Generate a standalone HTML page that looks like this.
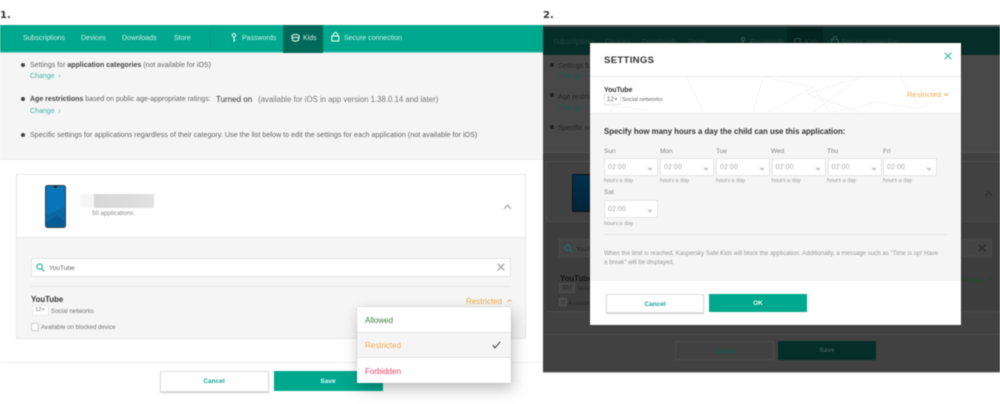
<!DOCTYPE html>
<html><head><meta charset="utf-8">
<style>
html,body{margin:0;padding:0;background:#fff}
body{width:1000px;height:404px;overflow:hidden;position:relative;font-family:"Liberation Sans",sans-serif;color:#555;filter:blur(.4px)}
div,span,b{position:absolute;white-space:nowrap}
b span,span span{position:static}
svg{position:absolute;overflow:visible}
.t{font-size:7px;line-height:10px}
.nav{font-size:7px;line-height:10px;color:#cdeee8;top:34px}
.dnav{font-size:7px;line-height:10px;color:#274640;top:38px}
.sel{width:52px;height:16px;background:#fff;border:1px solid #e6e6e6;top:158px}
.sel span{left:3px;top:4px;font-size:7px;line-height:10px;color:#aaa;letter-spacing:.1px}
.sel i{position:absolute;right:5px;top:7px;width:3px;height:3px;border-right:1px solid #999;border-bottom:1px solid #999;transform:rotate(45deg) scale(.8)}
.day{font-size:6.5px;line-height:8px;color:#888;top:148px}
.hd{font-size:5.6px;line-height:8px;color:#999;top:177px}
</style></head><body>

<!-- LEFT PANEL -->
<b style="left:0;top:10px;font:bold 10px/12px 'DejaVu Sans',sans-serif;color:#333">1.</b>
<div style="left:0;top:25px;width:543px;height:27px;background:#00a88e;border-bottom:1px solid #8fd8cb"></div>
<div style="left:0;top:53px;width:543px;height:106px;background:#f5f5f5;border-bottom:1px solid #eee"></div>
<div class="nav" style="left:23px">Subscriptions</div>
<div class="nav" style="left:81px">Devices</div>
<div class="nav" style="left:122px">Downloads</div>
<div class="nav" style="left:174px">Store</div>
<div style="left:210px;top:28px;width:1px;height:20px;background:#0b9680"></div>
<svg style="left:231px;top:33px" width="6" height="10" viewBox="0 0 6 10" fill="none" stroke="#dff5f1" stroke-width="1.1"><circle cx="3" cy="2.2" r="1.7"/><path d="M3 4v5M3 7h1.5"/></svg>
<div class="nav" style="left:242px">Passwords</div>
<div style="left:283px;top:25px;width:40px;height:28px;background:#00695a"></div>
<svg style="left:291px;top:33px" width="9" height="9" viewBox="0 0 9 9" fill="none" stroke="#dff5f1" stroke-width="1.1"><path d="M.8 3C1.5 1 7.5 1 8.2 3L7.6 7C6.5 8.4 2.5 8.4 1.4 7Z"/><path d="M1 4.5h7"/></svg>
<div class="nav" style="left:303px">Kids</div>
<svg style="left:331px;top:32px" width="9" height="10" viewBox="0 0 9 10" fill="none" stroke="#eafaf7" stroke-width="1.1"><rect x=".8" y="4" width="7" height="5"/><path d="M2.5 4V2.5a2 2 0 0 1 4 0V4"/></svg>
<div class="nav" style="left:344px">Secure connection</div>

<div style="left:21px;top:63px;width:4px;height:4px;border-radius:50%;background:#444"></div>
<div class="t" style="left:30px;top:61px;color:#666">Settings for <b style="position:static;color:#444">application categories</b> (not available for iOS)</div>
<div class="t" style="left:30px;top:72px;color:#3bb8a3">Change &nbsp;&rsaquo;</div>
<div style="left:21px;top:97px;width:4px;height:4px;border-radius:50%;background:#444"></div>
<div class="t" style="left:30px;top:95px;color:#666"><b style="position:static;color:#444">Age restrictions</b> based on public age-appropriate ratings:</div>
<div style="left:216px;top:94px;font-size:8px;line-height:12px;color:#333">Turned on</div>
<div class="t" style="left:258px;top:95px;color:#777;font-size:7.8px">(available for iOS in app version 1.38.0.14 and later)</div>
<div class="t" style="left:30px;top:107px;color:#3bb8a3">Change &nbsp;&rsaquo;</div>
<div style="left:21px;top:133px;width:4px;height:4px;border-radius:50%;background:#444"></div>
<div class="t" style="left:30px;top:130px;color:#666;font-size:7.2px">Specific settings for applications regardless of their category. Use the list below to edit the settings for each application (not available for iOS)</div>

<div style="left:16px;top:174px;width:508px;height:163px;background:#f5f5f5;border:1px solid #e8e8e8"></div>
<div style="left:17px;top:175px;width:508px;height:62px;background:#fff;border-bottom:1px solid #e8e8e8"></div>
<svg style="left:45px;top:185px" width="21" height="43" viewBox="0 0 21 43"><rect x=".5" y=".5" width="20" height="42" rx="2" fill="#0875b8" stroke="#343a40"/><path d="M1.5 30L19.5 22V41.500H1.500Z" fill="#0868a6"/><path d="M1.500 38L12 30L19.5 36V41.500H1.500Z" fill="#075c94"/><path d="M8 1h5l-2.500 2.500Z" fill="#222"/></svg>
<div style="left:80px;top:194px;width:14px;height:14px;background:#f6f6f6"></div>
<div style="left:94px;top:194px;width:59.500px;height:14px;background:linear-gradient(90deg,#d8d8d8 0%,#dcdcdc 60%,#e2e2e2 100%)"></div>
<div class="t" style="left:92px;top:209px;font-size:6.1px;color:#888;letter-spacing:.05px">50 applications</div>
<svg style="left:503px;top:204px" width="9" height="6" viewBox="0 0 9 6" fill="none" stroke="#999" stroke-width="1"><path d="M1 5L4.500 1L8 5"/></svg>

<div style="left:31px;top:258px;width:478px;height:17px;background:#fff;border:1px solid #e6e6e6"></div>
<svg style="left:36px;top:263px" width="9" height="9" viewBox="0 0 9 9" fill="none" stroke="#2eb39c" stroke-width="1.2"><circle cx="3.600" cy="3.600" r="2.600"/><path d="M5.500 5.500L8.300 8.300"/></svg>
<div class="t" style="left:49px;top:264px;font-size:6.5px;color:#666">YouTube</div>
<svg style="left:497px;top:263px" width="8" height="8" viewBox="0 0 9 9" fill="none" stroke="#a5a5a5" stroke-width="1.5"><path d="M.8 .8L8.200 8.200M8.200 .8L.8 8.200"/></svg>
<div style="left:31px;top:286px;width:480px;height:1px;background:#e6e6e6"></div>
<b style="left:31px;top:295px;font-size:7.800px;line-height:10px;color:#333">YouTube</b>
<div class="t" style="left:466px;top:297px;font-size:8px;color:#f0ad4e">Restricted</div>
<svg style="left:507px;top:299px" width="5" height="3" viewBox="0 0 5 3" fill="none" stroke="#f0ad4e"><path d="M.5 2.800L2.500 .8L4.500 2.800"/></svg>
<div style="left:31.500px;top:305px;width:15px;height:9px;background:#fff;border:1px solid #e6e6e6;font-size:5.800px;line-height:9px;text-align:center;color:#777">12+</div>
<div class="t" style="left:51px;top:307px;font-size:6.100px;color:#777">Social networks</div>
<div style="left:31px;top:323px;width:6px;height:6px;background:#fff;border:1px solid #ccc;border-radius:1px"></div>
<div class="t" style="left:41px;top:323px;font-size:6.050px;color:#777">Available on blocked device</div>

<div style="left:0;top:362px;width:543px;height:1px;background:#eee"></div>
<div style="left:159.500px;top:371px;width:107px;height:19px;background:#fff;border:1px solid #ddd;box-shadow:0 1px 1px #ccc;text-align:center;font:bold 6.500px/20px 'Liberation Sans',sans-serif;color:#17a68f">Cancel</div>
<div style="left:273.500px;top:371px;width:109px;height:20px;background:#00a88e;text-align:center;font:bold 6.500px/21px 'Liberation Sans',sans-serif;color:#e8f8f5">Save</div>

<div style="left:357.300px;top:307px;width:153.400px;height:76px;background:#fff;box-shadow:2px 6px 14px rgba(0,0,0,.25),0 0 1px rgba(0,0,0,.3)"></div>
<div style="left:357.300px;top:332px;width:153.400px;height:24px;background:#f5f5f5;border-top:1px solid #e4e4e4;border-bottom:1px solid #e4e4e4"></div>
<div class="t" style="left:365px;top:316px;font-size:8px;color:#3d7f45">Allowed</div>
<div class="t" style="left:365px;top:341px;font-size:8px;color:#f0ad4e">Restricted</div>
<div class="t" style="left:365px;top:367px;font-size:8px;color:#e8476a">Forbidden</div>
<svg style="left:492px;top:341px" width="9" height="8" viewBox="0 0 9 8" fill="none" stroke="#444" stroke-width="1.1"><path d="M.8 4.300L3 6.800L8.200 .8"/></svg>

<!-- RIGHT PANEL -->
<b style="left:543px;top:10px;font:bold 10px/12px 'DejaVu Sans',sans-serif;color:#333">2.</b>
<div style="left:543px;top:25px;width:457px;height:347px;background:#414141;box-shadow:0 1px 0 #bbb"></div>
<div style="left:543px;top:25px;width:457px;height:2px;background:#555"></div>
<div style="left:543px;top:27px;width:457px;height:28px;background:#062d27"></div>
<div style="left:787px;top:27px;width:36px;height:28px;background:#03231e"></div>
<div class="dnav" style="left:553px">Subscriptions</div>
<div class="dnav" style="left:605px">Devices</div>
<div class="dnav" style="left:642px">Downloads</div>
<div class="dnav" style="left:688px">Store</div>
<svg style="left:740px;top:37px" width="6" height="10" viewBox="0 0 6 10" fill="none" stroke="#3a5a54" stroke-width="1"><circle cx="3" cy="2.2" r="1.7"/><path d="M3 4v5"/></svg>
<div class="dnav" style="left:750px">Passwords</div>
<svg style="left:794px;top:37px" width="7" height="8" viewBox="0 0 9 9" fill="none" stroke="#3a5a54" stroke-width="1"><path d="M.8 3C1.5 1 7.500 1 8.200 3L7.600 7C6.500 8.400 2.500 8.400 1.400 7Z"/></svg>
<div class="dnav" style="left:805px">Kids</div>
<svg style="left:831px;top:36px" width="8" height="9" viewBox="0 0 9 10" fill="none" stroke="#3a5a54" stroke-width="1"><rect x=".8" y="4" width="7" height="5"/><path d="M2.500 4V2.500a2 2 0 0 1 4 0V4"/></svg>
<div class="dnav" style="left:841px">Secure connection</div>
<div style="left:543px;top:55px;width:457px;height:97px;background:#484848;border-bottom:1px solid #505050"></div>

<div style="left:550px;top:63px;width:4px;height:4px;border-radius:50%;background:#222"></div>
<div class="t" style="left:558px;top:62px;color:#262626">Settings for</div>
<div class="t" style="left:558px;top:72px;color:#1b5a50">Change &rsaquo;</div>
<div style="left:550px;top:93px;width:4px;height:4px;border-radius:50%;background:#222"></div>
<div class="t" style="left:558px;top:93px;color:#262626">Age restric</div>
<div class="t" style="left:558px;top:104px;color:#1b5a50">Change &rsaquo;</div>
<div style="left:550px;top:125px;width:4px;height:4px;border-radius:50%;background:#222"></div>
<div class="t" style="left:558px;top:124px;color:#262626">Specific set</div>

<div style="left:546px;top:161px;width:454px;height:151px;border:1px solid #4b4b4b;border-right:0;box-sizing:border-box;background:#414141"></div>
<div style="left:546px;top:221px;width:454px;height:91px;background:#3d3d3d;border-top:1px solid #4a4a4a;border-bottom:1px solid #4a4a4a;box-sizing:border-box"></div>
<div style="left:572px;top:174px;width:20px;height:38px;background:linear-gradient(180deg,#02324e,#012338);border-radius:2px;box-shadow:inset 0 0 0 1px #111"></div>
<div style="left:559px;top:239px;width:433px;height:18px;background:#444;border:1px solid #4b4b4b;box-sizing:border-box"></div>
<svg style="left:564px;top:244px" width="9" height="9" viewBox="0 0 9 9" fill="none" stroke="#1c6e60" stroke-width="1.2"><circle cx="3.600" cy="3.600" r="2.600"/><path d="M5.500 5.500L8.300 8.300"/></svg>
<div class="t" style="left:576px;top:245px;font-size:6.500px;color:#262626">YouTube</div>
<b style="left:560px;top:274px;font-size:7.800px;line-height:10px;color:#141414">YouTube</b>
<div style="left:559px;top:283px;width:14px;height:8px;border:1px solid #4d4d4d;background:#444;font-size:5.500px;line-height:8px;text-align:center;color:#222">12+</div>
<div class="t" style="left:577px;top:284px;font-size:5.800px;color:#262626">Social networks</div>
<div style="left:559px;top:298px;width:6px;height:6px;border:1px solid #555;background:#444"></div>
<div class="t" style="left:568px;top:299px;font-size:5.800px;color:#262626">Available on blocked device</div>
<svg style="left:978px;top:244px" width="8" height="8" viewBox="0 0 9 9" fill="none" stroke="#2c2c2c" stroke-width="1.4"><path d="M.8 .8L8.200 8.200M8.200 .8L.8 8.200"/></svg>
<svg style="left:984px;top:191px" width="9" height="6" viewBox="0 0 9 6" fill="none" stroke="#2a2a2a" stroke-width="1"><path d="M1 5L4.500 1L8 5"/></svg>
<div class="t" style="left:961px;top:275px;font-size:7.600px;color:#174f25">llowed</div>
<svg style="left:988px;top:277px" width="5" height="3" viewBox="0 0 5 3" fill="none" stroke="#174f25"><path d="M.5 .5L2.500 2.500L4.500 .5"/></svg>
<div style="left:543px;top:334px;width:457px;height:1px;background:#4b4b4b"></div>
<div style="left:675px;top:341px;width:97px;height:17px;background:#414141;border:1px solid #4c4c4c;text-align:center;font:bold 6.500px/19px 'Liberation Sans',sans-serif;color:#0e5a4d">Cancel</div>
<div style="left:778px;top:341px;width:98px;height:19px;background:#042e27;text-align:center;font:bold 6.500px/20px 'Liberation Sans',sans-serif;color:#3d5a55">Save</div>

<!-- MODAL -->
<div style="left:590px;top:43px;width:371px;height:282px;background:#fff;box-shadow:0 0 2px rgba(0,0,0,.4)"></div>
<b style="left:604px;top:55px;font-size:9.600px;line-height:12px;color:#333;letter-spacing:.3px">SETTINGS</b>
<svg style="left:944px;top:52px" width="8" height="8" viewBox="0 0 9 9" fill="none" stroke="#2eb39c" stroke-width="1.2"><path d="M.8 .8L8.200 8.200M8.200 .8L.8 8.200"/></svg>
<div style="left:590px;top:76px;width:371px;height:1px;background:#eaeaea"></div>
<svg style="left:590px;top:77px" width="371" height="36" viewBox="0 0 371 36" fill="none" stroke="#f1f1f1" stroke-width=".7"><path d="M20 35L48 0M97 0L113 35M163 35L173 0L223 10L177 35M223 10L240 35M270 0L223 35M270 0L217 17L270 35M310 0L330 32L371 10M330 32L287 25L243 35M14 28L60 33"/></svg>
<b style="left:604px;top:86px;font-size:6.900px;line-height:10px;color:#333">YouTube</b>
<div style="left:604px;top:94px;width:14.500px;height:9px;background:#fff;border:1px solid #e4e4e4;font-size:6.500px;line-height:9px;text-align:center;color:#666">12+</div>
<div class="t" style="left:622px;top:95px;font-size:5.800px;color:#666">Social networks</div>
<div class="t" style="left:907px;top:90px;font-size:7.600px;color:#f0ad4e">Restricted</div>
<svg style="left:944px;top:93px" width="5" height="3" viewBox="0 0 5 3" fill="none" stroke="#f0ad4e"><path d="M.5 .5L2.500 2.500L4.500 .5"/></svg>
<div style="left:590px;top:113px;width:371px;height:168px;background:#f5f5f5;border-top:1px solid #eaeaea;box-sizing:border-box"></div>
<b style="left:604px;top:126px;font-size:7.800px;line-height:12px;color:#333">Specify how many hours a day the child can use this application:</b>

<div class="day" style="left:604px">Sun</div><div class="day" style="left:660px">Mon</div><div class="day" style="left:716px">Tue</div><div class="day" style="left:771px">Wed</div><div class="day" style="left:827px">Thu</div><div class="day" style="left:883px">Fri</div>
<div class="sel" style="left:604px"><span>02:00</span><i></i></div>
<div class="sel" style="left:660px"><span>02:00</span><i></i></div>
<div class="sel" style="left:716px"><span>02:00</span><i></i></div>
<div class="sel" style="left:771.500px"><span>02:00</span><i></i></div>
<div class="sel" style="left:827.500px"><span>02:00</span><i></i></div>
<div class="sel" style="left:883px"><span>02:00</span><i></i></div>
<div class="hd" style="left:604px">hours a day</div><div class="hd" style="left:660px">hours a day</div><div class="hd" style="left:716px">hours a day</div><div class="hd" style="left:771.500px">hours a day</div><div class="hd" style="left:827px">hours a day</div><div class="hd" style="left:883px">hours a day</div>
<div class="day" style="left:604px;top:189px">Sat</div>
<div class="sel" style="left:604px;top:200px"><span>02:00</span><i></i></div>
<div class="hd" style="left:604px;top:220px">hours a day</div>
<div style="left:604px;top:234px;width:343px;height:1px;background:#e8e8e8"></div>
<div style="left:604px;top:250px;font-size:6.100px;line-height:8.800px;color:#999">When the limit is reached, Kaspersky Safe Kids will block the application. Additionally, a message such as "Time is up! Have<br>a break" will be displayed.</div>
<div style="left:606px;top:294px;width:96px;height:17px;background:#fff;border:1px solid #ddd;box-shadow:0 1px 1px #ccc;text-align:center;font:bold 6.500px/19px 'Liberation Sans',sans-serif;color:#17a68f">Cancel</div>
<div style="left:709px;top:294px;width:98px;height:18px;background:#00a88e;text-align:center;font:bold 6.500px/20px 'Liberation Sans',sans-serif;color:#eafaf7">OK</div>
</body></html>
